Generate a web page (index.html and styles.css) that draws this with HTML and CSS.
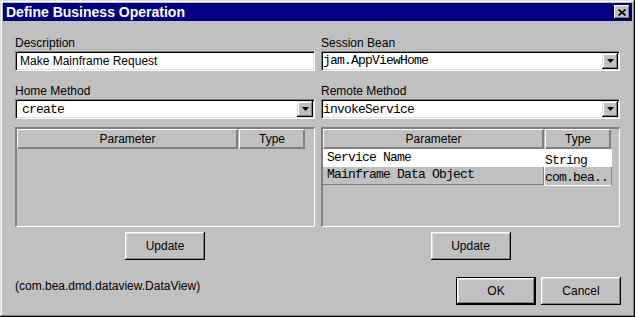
FILE: index.html
```html
<!DOCTYPE html>
<html lang="en">
<head>
  <meta charset="UTF-8" />
  <title>Define Business Operation</title>
  <link rel="stylesheet" href="styles.css">
</head>
<body>

  <div class="window">
    <div class="titlebar">
      <span class="title">Define Business Operation</span>
      <button class="close">
        <svg width="8" height="7" viewBox="0 0 8 7"><path d="M0.5 0.5 L7.5 6.5 M7.5 0.5 L0.5 6.5" stroke="#000" stroke-width="1.6" fill="none"/></svg>
      </button>
    </div>

    <div class="form">
      <div class="column">
        <div class="field-label">Description</div>
        <div class="textbox">Make Mainframe Request</div>

        <div class="field-label next">Home Method</div>
        <div class="combo">
          <span class="combo-value low">create</span>
          <span class="combo-btn"><svg width="7" height="4" viewBox="0 0 7 4"><polygon points="0,0 7,0 3.5,4" fill="#000"/></svg></span>
        </div>

        <div class="table">
          <div class="table-head">
            <div class="th th-param">Parameter</div>
            <div class="th th-type">Type</div>
          </div>
        </div>

        <button class="btn update">Update</button>
      </div>

      <div class="column">
        <div class="field-label">Session Bean</div>
        <div class="combo">
          <span class="combo-value flush">jam.AppViewHome</span>
          <span class="combo-btn"><svg width="7" height="4" viewBox="0 0 7 4"><polygon points="0,0 7,0 3.5,4" fill="#000"/></svg></span>
        </div>

        <div class="field-label next">Remote Method</div>
        <div class="combo">
          <span class="combo-value flush low">invokeService</span>
          <span class="combo-btn"><svg width="7" height="4" viewBox="0 0 7 4"><polygon points="0,0 7,0 3.5,4" fill="#000"/></svg></span>
        </div>

        <div class="table">
          <div class="table-head">
            <div class="th th-param">Parameter</div>
            <div class="th th-type">Type</div>
          </div>
          <div class="row row-white">
            <div class="cell cell-param">Service Name</div>
            <div class="cell cell-type">String</div>
          </div>
          <div class="row row-framed">
            <div class="cell cell-param">Mainframe Data Object</div>
            <div class="cell cell-type">com.bea..</div>
          </div>
        </div>

        <button class="btn update">Update</button>
      </div>
    </div>

    <div class="footer">
      <span class="classname">(com.bea.dmd.dataview.DataView)</span>
      <div class="actions">
        <button class="btn default">OK</button>
        <button class="btn">Cancel</button>
      </div>
    </div>
  </div>

</body>
</html>
```

FILE: styles.css
```css
body {
  margin: 0;
  font-family: "Liberation Sans", Arial, sans-serif;
  font-size: 12px;
  color: #000;
  background-color: #c0c0c0;
}

.window {
  width: 635px;
  height: 317px;
  box-sizing: border-box;
  padding: 3px;
  background-color: #c0c0c0;
  box-shadow: inset -1px -1px #000, inset 1px 1px #dfdfdf,
              inset -2px -2px #808080, inset 2px 2px #fff;
}

.titlebar {
  height: 18px;
  display: flex;
  align-items: center;
  justify-content: space-between;
  padding: 0 2px 0 3px;
  background-color: #000080;
  color: #fff;
  font-weight: bold;
  font-size: 14px;
  line-height: 18px;
}

.close {
  width: 16px;
  height: 14px;
  padding: 0;
  border: none;
  background-color: #c0c0c0;
  display: flex;
  align-items: center;
  justify-content: center;
  box-shadow: inset -1px -1px #000, inset 1px 1px #fff, inset -2px -2px #808080;
}

.form {
  display: grid;
  grid-template-columns: 300px 299px;
  column-gap: 6px;
  padding: 14px 12px 0 12px;
}

.column {
  display: flex;
  flex-direction: column;
}

.field-label {
  height: 16px;
  line-height: 16px;
}

.field-label.next {
  margin-top: 12px;
}

.textbox, .combo {
  height: 20px;
  box-sizing: border-box;
  background-color: #fff;
  border: 1px solid;
  border-color: #808080 #fff #fff #808080;
  box-shadow: inset 1px 1px #000, inset -1px -1px #dfdfdf;
}

.textbox {
  line-height: 18px;
  padding-left: 4px;
}

.combo {
  display: flex;
  padding: 1px;
}

.combo-value {
  flex: 1;
  font-family: "Liberation Mono", "Courier New", monospace;
  font-size: 13px;
  letter-spacing: -0.8px;
  line-height: 16px;
  padding-left: 5px;
  white-space: nowrap;
  overflow: hidden;
}

.combo-value.flush {
  padding-left: 0;
}

.combo-value.low {
  padding-top: 2px;
  line-height: 14px;
}

.combo-btn {
  width: 16px;
  height: 16px;
  box-sizing: border-box;
  background-color: #c0c0c0;
  display: flex;
  align-items: center;
  justify-content: center;
  box-shadow: inset -1px -1px #000, inset 1px 1px #dfdfdf,
              inset -2px -2px #808080, inset 2px 2px #fff;
}

.table {
  height: 100px;
  box-sizing: border-box;
  margin-top: 8px;
  border-style: solid;
  border-width: 2px 1px 1px 2px;
  border-color: #808080 #fff #fff #808080;
}

.table-head {
  display: flex;
  height: 20px;
}

.th {
  height: 20px;
  box-sizing: border-box;
  line-height: 18px;
  text-align: center;
  border-top: 1px solid #fff;
  border-left: 1px solid #fff;
  border-right: 1px solid #808080;
  border-bottom: 1px solid #808080;
  box-shadow: inset -1px -1px #808080;
}

.th-param {
  width: 221px;
  margin-right: 1px;
}

.th-type {
  width: 66px;
}

.row {
  display: flex;
  width: 289px;
  height: 18px;
  font-family: "Liberation Mono", "Courier New", monospace;
  font-size: 13px;
  letter-spacing: -0.8px;
}

.cell {
  box-sizing: border-box;
  height: 18px;
  white-space: nowrap;
}

.cell-param {
  width: 222px;
  padding-left: 4px;
  line-height: 18px;
}

.cell-type {
  width: 67px;
  padding-top: 3px;
  line-height: 18px;
}

.row-white {
  background-color: #fff;
}

.row-framed .cell-param {
  width: 221px;
  line-height: 16px;
  border-right: 1px solid #808080;
  border-bottom: 1px solid #808080;
}

.row-framed .cell-type {
  width: 68px;
  height: 19px;
  line-height: 16px;
  overflow: hidden;
  border-left: 1px solid #fff;
  border-right: 1px solid #808080;
  border-bottom: 1px solid #fff;
}

.btn {
  width: 80px;
  height: 28px;
  box-sizing: border-box;
  padding: 0;
  border: none;
  background-color: #c0c0c0;
  font-family: "Liberation Sans", Arial, sans-serif;
  font-size: 12px;
  color: #000;
  box-shadow: inset -1px -1px #000, inset 1px 1px #fff,
              inset -2px -2px #808080, inset 2px 2px #dfdfdf;
}

.btn.default {
  border: 1px solid #000;
}

.update {
  align-self: center;
  margin-top: 5px;
}

.footer {
  display: flex;
  justify-content: space-between;
  align-items: flex-start;
  margin-top: 17px;
  padding: 0 11px 0 12px;
}

.classname {
  line-height: 16px;
  padding-top: 1px;
}

.actions {
  display: flex;
  gap: 5px;
}
```
